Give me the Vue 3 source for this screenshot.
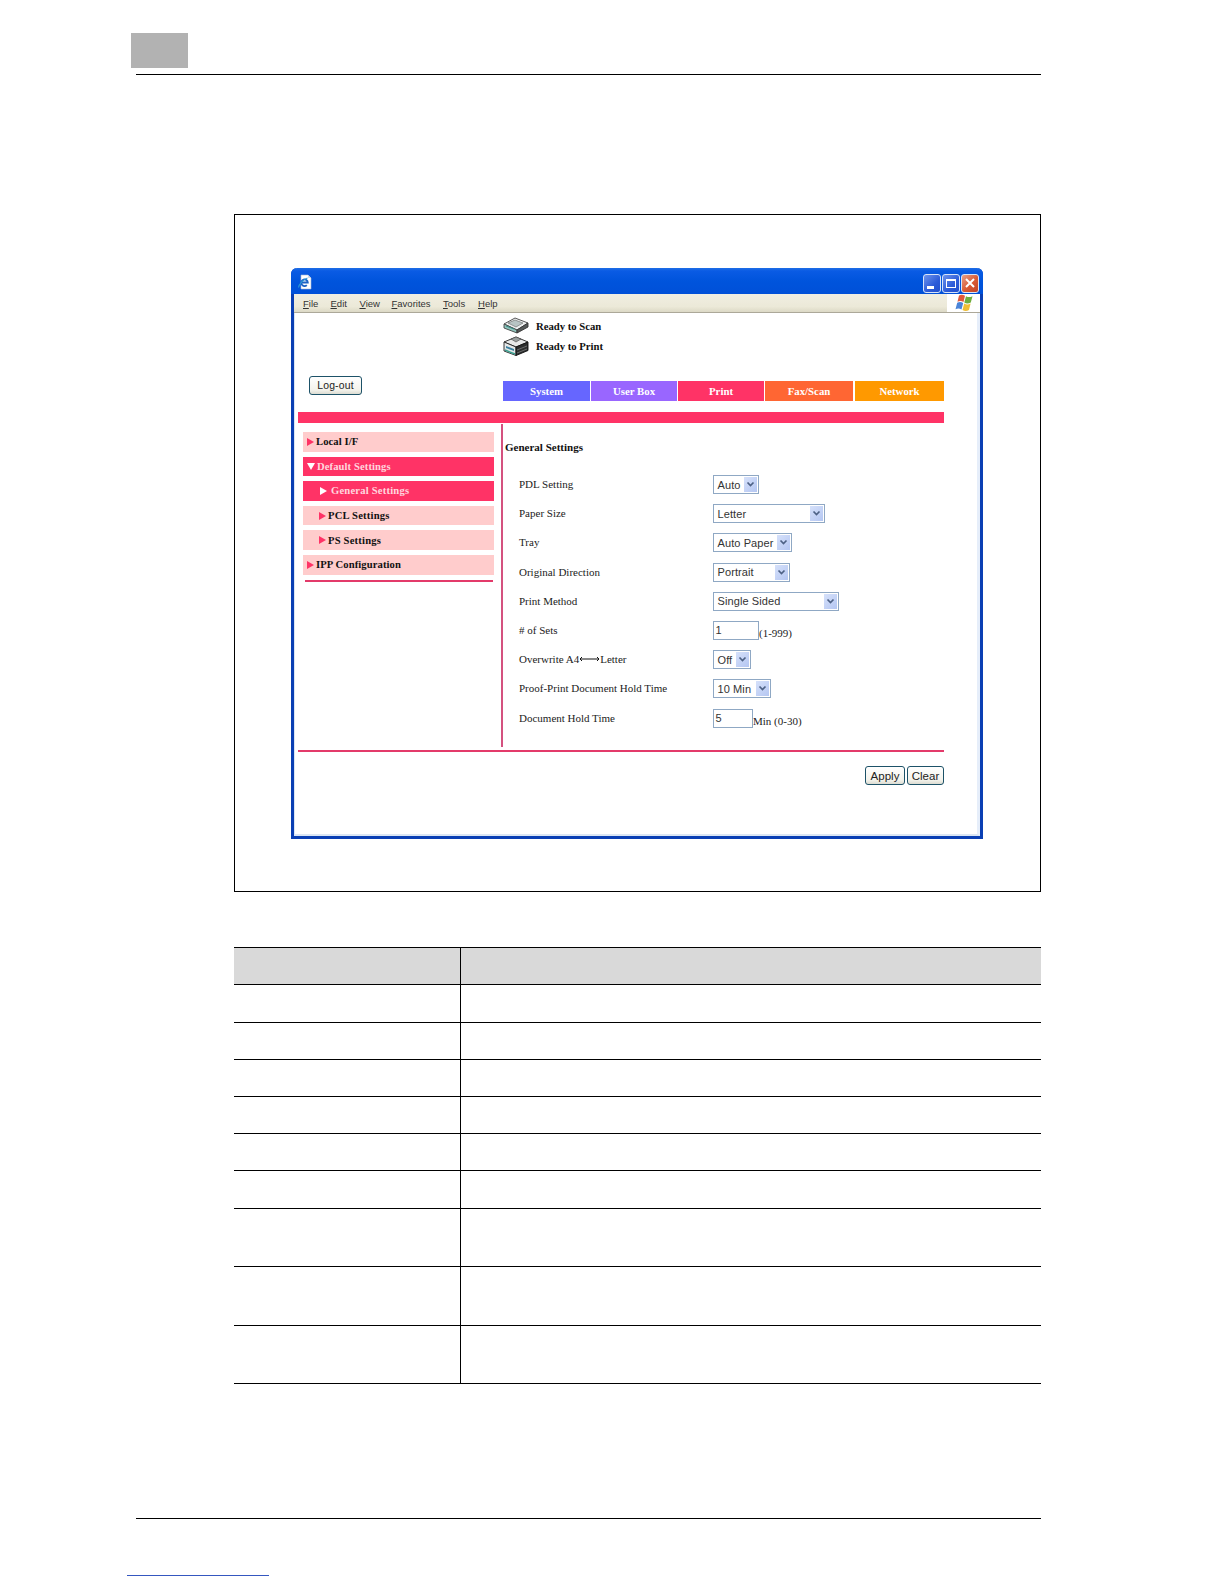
<script setup>
const menus = [
  { t: 'File', u: 'F', r: 'ile', w: 27.500 },
  { t: 'Edit', u: 'E', r: 'dit', w: 29 },
  { t: 'View', u: 'V', r: 'iew', w: 32 },
  { t: 'Favorites', u: 'F', r: 'avorites', w: 51.500 },
  { t: 'Tools', u: 'T', r: 'ools', w: 35 },
  { t: 'Help', u: 'H', r: 'elp', w: 30 }
]
const tabs = [
  { t: 'System', c: 'sys' },
  { t: 'User Box', c: 'box' },
  { t: 'Print', c: 'prt' },
  { t: 'Fax/Scan', c: 'fax' },
  { t: 'Network', c: 'net' }
]
const nav = [
  { t: 'Local I/F', c: 'lv0', a: 'right' },
  { t: 'Default Settings', c: 'lv0 on open', a: 'down' },
  { t: 'General Settings', c: 'lv1 on cur', a: 'right' },
  { t: 'PCL Settings', c: 'lv1', a: 'right' },
  { t: 'PS Settings', c: 'lv1', a: 'right' },
  { t: 'IPP Configuration', c: 'lv0', a: 'right' }
]
const rows = [
  { l: 'PDL Setting', v: 'Auto', w: 46 },
  { l: 'Paper Size', v: 'Letter', w: 112 },
  { l: 'Tray', v: 'Auto Paper', w: 79 },
  { l: 'Original Direction', v: 'Portrait', w: 77 },
  { l: 'Print Method', v: 'Single Sided', w: 126 },
  { l: '# of Sets', v: '1', w: 46, input: true, note: '(1-999)' },
  { l: 'Overwrite A4', tail: 'Letter', v: 'Off', w: 38 },
  { l: 'Proof-Print Document Hold Time', v: '10 Min', w: 58 },
  { l: 'Document Hold Time', v: '5', w: 40, input: true, note: 'Min (0-30)' }
]
const tableRows = [38, 37, 37, 37, 37.5, 37.5, 58, 59, 58]
</script>

<template>
  <div class="page">
    <header class="head">
      <div class="chapter"></div>
      <div class="rule"></div>
    </header>

    <section class="figure">
      <div class="win">
        <div class="title">
          <svg class="ie" viewBox="0 0 16 16" width="16" height="16">
            <path d="M4 1h7l3 3v11H4z" fill="#fff" stroke="#a8bbd4" stroke-width=".6" />
            <path d="M11 1v3h3" fill="#cfd9e8" />
            <path d="M4.500 8.500h6.300a3.300 3.300 0 1 0-1 2.600" fill="none" stroke="#1c62c4" stroke-width="1.800" />
            <path d="M1.500 13.500c.5-3.500 5-8.500 9-9.500" fill="none" stroke="#2a9ad8" stroke-width="1.100" />
          </svg>
          <div class="ctrls">
            <div class="ctrl"><span class="min"></span></div>
            <div class="ctrl"><span class="max"></span></div>
            <div class="ctrl close">
              <svg viewBox="0 0 12 12" width="12" height="12">
                <path d="M2 2l8 8M10 2l-8 8" stroke="#fff" stroke-width="2" />
              </svg>
            </div>
          </div>
        </div>

        <div class="menubar">
          <div class="menus">
            <span v-for="m in menus" :key="m.t" class="menu" :style="{ width: m.w + 'px' }"><u>{{ m.u }}</u>{{ m.r }}</span>
          </div>
          <div class="flag">
            <svg viewBox="0 0 20 18" width="20" height="18">
              <path d="M5 1.500c2-1 4-1 6 .3L9.500 8c-2-1.200-4-1.200-6-.2z" fill="#e2583a" />
              <path d="M12 2.200c2 1.200 4 1.200 6.500 0L16.800 8.600c-2.200 1.200-4.600 1.200-6.500 0z" fill="#6fae3e" />
              <path d="M3.200 8.800c2-1 4-1 6 .2L7.500 15.500c-2-1.200-4-1.200-6-.2z" fill="#4a84d8" />
              <path d="M10.200 9.500c2 1.200 4.300 1.200 6.400 0L15 16c-2.100 1.200-4.500 1.200-6.500 0z" fill="#efbe36" />
            </svg>
          </div>
        </div>

        <div class="body">
          <div class="top">
            <div class="logout-col">
              <button class="btn logout">Log-out</button>
            </div>
            <div class="top-right">
              <div class="status">
                <svg class="pr" viewBox="0 0 26 17" width="26" height="17">
                  <path d="M1 7l11-6 13 5-11 7z" fill="#eef0f0" stroke="#444" stroke-width=".9" />
                  <path d="M5 6l7-3 8 3-7 4z" fill="#b8c4c4" stroke="#666" stroke-width=".6" />
                  <path d="M1 7v4l13 5v-3z" fill="#8fc4bc" stroke="#444" stroke-width=".9" />
                  <path d="M14 13v3l11-6V6z" fill="#565a5a" stroke="#333" stroke-width=".9" />
                  <path d="M3 9l8 3" stroke="#3a8a84" stroke-width="1" />
                </svg>
                <span>Ready to Scan</span>
              </div>
              <div class="status second">
                <svg class="pr" viewBox="0 0 26 21" width="26" height="21">
                  <path d="M1 7l12-5 12 5-12 5z" fill="#e8eaea" stroke="#222" stroke-width=".9" />
                  <path d="M8 4l5-2 5 2-5 3z" fill="#9aa0a0" stroke="#444" stroke-width=".6" />
                  <path d="M1 7v9l12 4.500V12z" fill="#e4e8e8" stroke="#222" stroke-width=".9" />
                  <path d="M13 12v8.500l12-5V7z" fill="#2b2d2d" stroke="#111" stroke-width=".9" />
                  <path d="M3 11l8 3v2l-8-3z" fill="#3a80a0" />
                  <path d="M2 15l10 4" stroke="#3aa090" stroke-width="1.400" />
                  <path d="M14 15l10-4M14 18l10-4" stroke="#888" stroke-width=".7" />
                </svg>
                <span>Ready to Print</span>
              </div>
              <nav class="tabs">
                <div v-for="t in tabs" :key="t.t" class="tab" :class="t.c">{{ t.t }}</div>
              </nav>
            </div>
          </div>

          <div class="bar"></div>

          <div class="main">
            <aside class="side">
              <div v-for="n in nav" :key="n.t" class="item" :class="n.c">
                <i class="arrow" :class="n.a"></i>{{ n.t }}
              </div>
              <div class="side-rule"></div>
            </aside>

            <div class="content">
              <h2 class="h">General Settings</h2>
              <div class="form">
                <template v-for="r in rows" :key="r.l">
                  <div class="label">
                    {{ r.l }}<svg v-if="r.tail" class="dbl" viewBox="0 0 21 6" width="21" height="6">
                      <path d="M1 3h19M3 1L1 3l2 2M18 1l2 2-2 2" fill="none" stroke="#111" stroke-width="1" />
                    </svg>{{ r.tail }}
                  </div>
                  <div class="field">
                    <template v-if="r.input">
                      <div class="input" :style="{ width: r.w + 'px' }">{{ r.v }}</div>
                      <span class="note">{{ r.note }}</span>
                    </template>
                    <div v-else class="select" :style="{ width: r.w + 'px' }">
                      <span class="val">{{ r.v }}</span>
                      <span class="drop">
                        <svg viewBox="0 0 9 7" width="9" height="7">
                          <path d="M1.500 1.500L4.500 4.500 7.500 1.500" fill="none" stroke="#4d6185" stroke-width="1.700" />
                        </svg>
                      </span>
                    </div>
                  </div>
                </template>
              </div>
            </div>
          </div>

          <div class="rule2"></div>

          <div class="actions">
            <button class="btn apply">Apply</button>
            <button class="btn clear">Clear</button>
          </div>
        </div>
      </div>
    </section>

    <section class="table">
      <div class="thead">
        <div class="c1"></div>
        <div class="c2"></div>
      </div>
      <div v-for="(h, i) in tableRows" :key="i" class="tr" :style="{ height: h + 'px' }">
        <div class="c1"></div>
        <div class="c2"></div>
      </div>
    </section>

    <footer class="foot">
      <div class="foot-rule"></div>
      <div class="foot-link"></div>
    </footer>
  </div>
</template>

<style scoped>
.page {
  width: 1224px;
  height: 1584px;
  background: #fff;
  overflow: hidden;
  display: flex;
  flex-direction: column;
  font-family: "Liberation Serif", serif;
  color: #111;
}
.head {
  flex: none;
  padding: 33px 183px 0 131px;
}
.chapter {
  width: 57px;
  height: 35px;
  background: #b2b2b2;
}
.rule {
  height: 1.500px;
  background: #000;
  margin: 5.500px 0 0 5px;
}
.figure {
  flex: none;
  margin: 139px 0 0 234px;
  width: 807px;
  height: 678px;
  border: 1px solid #000;
  box-sizing: border-box;
  padding: 53px 0 0 56px;
}
.win {
  width: 692px;
  height: 571px;
  box-sizing: border-box;
  background: #fff;
  border: 3px solid #0a3fb4;
  border-top: 0;
  border-radius: 6px 6px 0 0;
  display: flex;
  flex-direction: column;
}
.title {
  margin: 0 -3px;
  height: 26px;
  flex: none;
  border-radius: 6px 6px 0 0;
  background: linear-gradient(#1f6ee6 0, #0a5be4 3px, #0054dc 50%, #0050d8 100%);
  display: flex;
  align-items: center;
  justify-content: space-between;
  padding: 0 4px 0 6px;
}
.ie {
  margin-top: 2px;
}
.ctrls {
  display: flex;
  gap: 1px;
  margin-top: 4px;
}
.ctrl {
  width: 18px;
  height: 19px;
  box-sizing: border-box;
  border: 1px solid #d8e4f8;
  border-radius: 3px;
  background: linear-gradient(135deg, #6d93ec, #2c5bd8 60%, #2250cc);
  display: flex;
  align-items: center;
  justify-content: center;
}
.ctrl.close {
  background: linear-gradient(135deg, #e8a088, #d85a34 55%, #c04428);
}
.min {
  width: 7px;
  height: 2.500px;
  background: #fff;
  margin: 9px 3px 0 0;
}
.max {
  width: 10px;
  height: 9px;
  border: 1px solid #fff;
  border-top-width: 2px;
  box-sizing: border-box;
}
.menubar {
  height: 19px;
  flex: none;
  background: linear-gradient(#f0eee2, #ece9d8 70%, #dcd9c6);
  border-bottom: 1px solid #aca899;
  box-sizing: border-box;
  display: flex;
  justify-content: space-between;
}
.menus {
  display: flex;
  padding-left: 9px;
  font: 9.500px "Liberation Sans", sans-serif;
  color: #333;
  align-items: center;
}
.menu {
  flex: none;
}
.flag {
  width: 33px;
  background: #fff;
  display: flex;
  align-items: center;
  justify-content: center;
}
.body {
  flex: 1;
  min-height: 0;
  padding-left: 3px;
  display: flex;
  flex-direction: column;
  border-left: 1px solid #dbe6f4;
  border-right: 3px solid #e6eefa;
  border-bottom: 2px solid #dbe6f4;
}
.top {
  height: 99px;
  flex: none;
  display: flex;
}
.logout-col {
  width: 205px;
  flex: none;
  padding: 63px 0 0 11px;
  box-sizing: border-box;
}
.btn {
  display: block;
  box-sizing: border-box;
  height: 19px;
  padding: 0;
  border: 1px solid #1d5268;
  border-radius: 3px;
  background: linear-gradient(#fff, #f4f3ec 75%, #dcdcd2);
  font: 11.500px "Liberation Sans", sans-serif;
  color: #222;
}
.logout {
  width: 53px;
  font-size: 10.400px;
  letter-spacing: .2px;
}
.top-right {
  flex: 1;
  padding-top: 4px;
  display: flex;
  flex-direction: column;
}
.status {
  display: flex;
  align-items: center;
  height: 17px;
  font-weight: 700;
  font-size: 10.700px;
}
.status.second {
  height: 21px;
  margin-top: 1px;
}
.status span {
  margin-left: 7px;
}
.pr {
  flex: none;
}
.tabs {
  display: flex;
  margin-top: 25px;
  height: 20px;
  width: 441px;
}
.tab {
  color: #fff;
  font-weight: 700;
  font-size: 10.800px;
  text-align: center;
  line-height: 21px;
  box-sizing: border-box;
  border-right: 1px solid #fff;
}
.sys { width: 88px; background: #6666ff; }
.box { width: 87px; background: #9966ff; }
.prt { width: 87px; background: #ff3366; }
.fax { width: 90px; background: #ff6633; border-right: 2px solid #fff; }
.net { width: 89px; background: #ff9900; border: 0; }
.bar {
  height: 11px;
  width: 646px;
  flex: none;
  background: #ff3366;
}
.main {
  height: 323px;
  flex: none;
  margin-top: 1px;
  display: flex;
}
.side {
  width: 203px;
  flex: none;
  box-sizing: border-box;
  padding: 8px 0 0 5px;
  display: flex;
  flex-direction: column;
  gap: 5px;
}
.item {
  width: 191px;
  height: 19.600px;
  flex: none;
  box-sizing: border-box;
  background: #ffcccc;
  display: flex;
  align-items: center;
  font-weight: 700;
  font-size: 10.600px;
  color: #111;
  letter-spacing: .1px;
}
.item.on {
  background: #ff3366;
  color: #ffd6de;
}
.lv0 { padding-left: 4px; }
.lv1 { padding-left: 16px; letter-spacing: .2px; }
.cur { padding-left: 17px; }
.arrow {
  width: 0;
  height: 0;
  flex: none;
}
.arrow.right {
  border-left: 7px solid #ff3366;
  border-top: 4px solid transparent;
  border-bottom: 4px solid transparent;
  margin-right: 2px;
}
.cur .arrow.right {
  border-left-color: #fff;
  margin-right: 4px;
}
.arrow.down {
  border-top: 7px solid #fff;
  border-left: 4px solid transparent;
  border-right: 4px solid transparent;
  margin-right: 2px;
}
.side-rule {
  width: 188px;
  height: 2px;
  margin: 0 0 0 2px;
  background: #e33a6a;
}
.content {
  flex: 1;
  border-left: 2px solid #d4517f;
  padding-left: 2px;
}
.h {
  margin: 16px 0 0;
  font-size: 11px;
  line-height: 14px;
  font-weight: 700;
}
.form {
  margin: 16px 0 0 14px;
  display: grid;
  grid-template-columns: 194px 1fr;
  grid-auto-rows: 29.200px;
  align-items: center;
}
.label {
  font-size: 11px;
  color: #222;
  white-space: nowrap;
  display: flex;
  align-items: center;
  padding-bottom: 1px;
}
.dbl {
  flex: none;
}
.field {
  display: flex;
  align-items: center;
}
.select,
.input {
  height: 19px;
  box-sizing: border-box;
  border: 1px solid #8fa8c4;
  background: #fff;
  font: 11px "Liberation Sans", sans-serif;
  letter-spacing: .1px;
  color: #333;
  flex: none;
}
.select {
  display: flex;
  justify-content: space-between;
  align-items: center;
  padding: 1px 1px 1px 3.500px;
}
.val {
  white-space: nowrap;
}
.drop {
  width: 13px;
  height: 15px;
  flex: none;
  background: linear-gradient(135deg, #d6e1fa, #b4c6f2);
  display: flex;
  align-items: center;
  justify-content: center;
}
.input {
  padding-left: 1.500px;
  line-height: 17px;
}
.note {
  font-size: 11px;
  color: #222;
  margin: 5px 0 0 0;
  white-space: nowrap;
}
.rule2 {
  height: 2px;
  width: 646px;
  flex: none;
  margin-top: 3px;
  background: #e33a6a;
}
.actions {
  width: 646px;
  display: flex;
  justify-content: flex-end;
  gap: 2px;
  margin-top: 14px;
}
.apply { width: 40px; }
.clear { width: 37px; }
.table {
  margin: 55px 0 0 234px;
  width: 807px;
  border-top: 1px solid #000;
  flex: none;
}
.thead {
  height: 35.500px;
  background: #d9d9d9;
  border-bottom: 1px solid #000;
  display: flex;
  box-sizing: content-box;
}
.tr {
  display: flex;
  box-sizing: border-box;
  border-bottom: 1px solid #000;
}
.c1 {
  width: 226px;
  flex: none;
  border-right: 1px solid #000;
}
.c2 {
  flex: 1;
}
.foot {
  flex: none;
  margin: 134px 0 0 136px;
  width: 905px;
}
.foot-rule {
  height: 1.500px;
  background: #000;
}
.foot-link {
  width: 142px;
  height: 1px;
  margin: 56px 0 0 -9px;
  background: #3557c0;
}
</style>

<style>
html, body {
  margin: 0;
  background: #fff;
}
</style>
